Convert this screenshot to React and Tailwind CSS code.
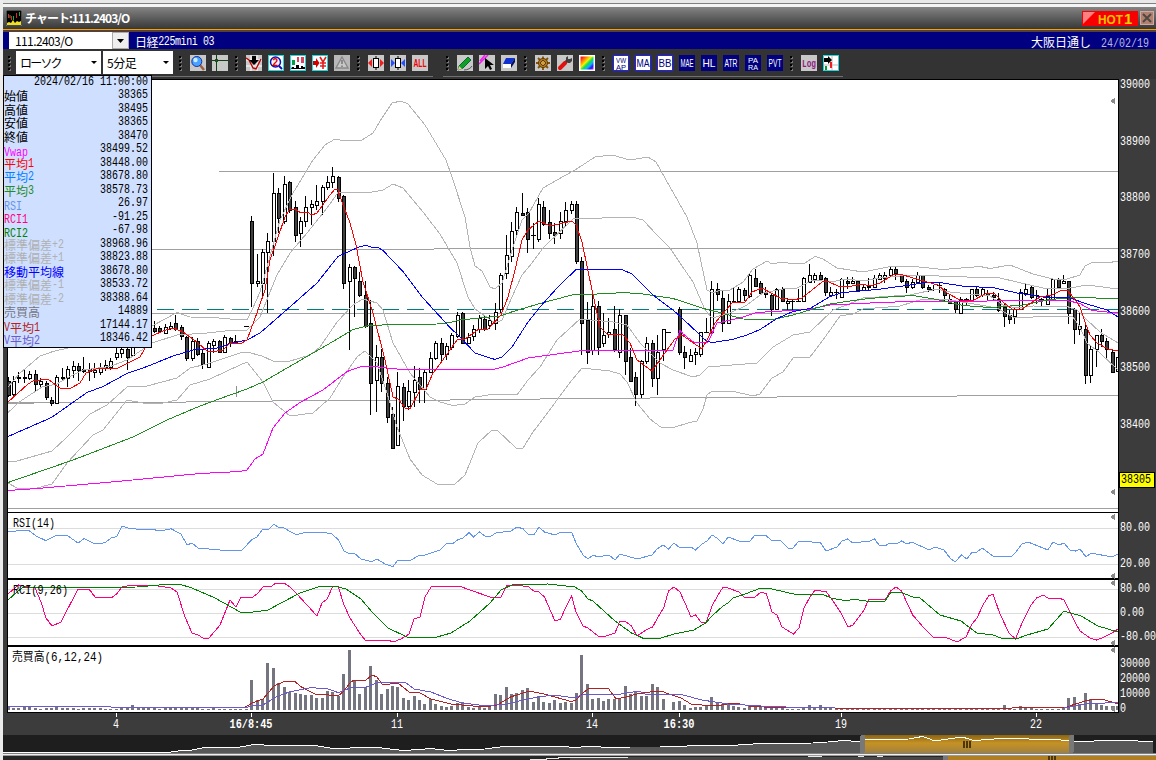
import React from "react";

// index, high, body top, body bottom, low, kind (1 = falling, 0 = rising)
const CANDLES = [
  [-45, 377, 381, 395, 397, 1], [-44, 376, 381, 394, 396, 0], [-43, 372, 377, 378, 383, 1], [-42, 370, 377, 378, 383, 1],
  [-41, 371, 374, 378, 380, 0], [-40, 370, 374, 384, 391, 1], [-39, 378, 381, 384, 387, 0], [-38, 381, 383, 397, 400, 1],
  [-37, 397, 400, 403, 406, 1], [-36, 375, 377, 403, 403, 0], [-35, 368, 377, 378, 380, 1], [-34, 366, 369, 378, 387, 0],
  [-33, 361, 366, 370, 378, 0], [-32, 363, 366, 370, 381, 1], [-31, 357, 369, 371, 373, 1], [-30, 363, 369, 371, 381, 1],
  [-29, 363, 370, 372, 378, 0], [-28, 363, 367, 372, 375, 0], [-27, 360, 365, 367, 371, 0], [-26, 358, 361, 367, 370, 0],
  [-25, 348, 353, 357, 360, 0], [-24, 343, 349, 353, 358, 0], [-23, 345, 349, 357, 370, 1], [-22, 343, 345, 355, 357, 0],
  [-18, 321, 328, 331, 333, 1], [-17, 326, 328, 331, 333, 1], [-16, 324, 327, 333, 334, 0], [-15, 322, 326, 328, 330, 0],
  [-14, 315, 323, 329, 331, 1], [-13, 325, 327, 336, 340, 1], [-12, 336, 337, 358, 361, 1], [-11, 337, 341, 358, 361, 0],
  [-10, 338, 341, 354, 356, 1], [-9, 350, 353, 364, 369, 1], [-8, 341, 343, 367, 367, 0], [-7, 339, 341, 345, 353, 0],
  [-6, 340, 341, 352, 353, 1], [-5, 335, 337, 352, 353, 0], [-4, 337, 338, 343, 347, 1], [-3, 335, 341, 343, 344, 1],
  [-1, 326, 326, 326, 327, 1], [0, 216, 221, 283, 307, 1], [1, 254, 281, 283, 287, 0], [2, 249, 252, 283, 297, 0],
  [3, 233, 241, 252, 313, 0], [4, 173, 193, 241, 256, 0], [5, 188, 193, 218, 233, 1], [6, 176, 184, 221, 224, 0],
  [7, 181, 182, 210, 213, 1], [8, 201, 207, 235, 242, 1], [9, 217, 221, 233, 247, 0], [10, 196, 207, 221, 227, 0],
  [11, 200, 204, 207, 225, 0], [12, 185, 201, 205, 210, 0], [13, 185, 187, 201, 215, 0], [14, 176, 182, 187, 190, 0],
  [15, 167, 176, 182, 188, 0], [16, 176, 177, 198, 202, 1], [17, 195, 196, 283, 289, 1], [18, 264, 267, 281, 350, 0],
  [19, 266, 267, 278, 317, 1], [20, 272, 281, 295, 297, 1], [21, 281, 295, 326, 328, 1], [22, 300, 323, 383, 415, 1],
  [23, 345, 357, 380, 412, 0], [24, 349, 357, 383, 392, 1], [25, 377, 383, 417, 423, 1], [26, 407, 414, 448, 448, 1],
  [27, 372, 386, 445, 446, 0], [28, 383, 387, 406, 421, 1], [29, 380, 391, 406, 410, 0], [30, 366, 380, 392, 407, 0],
  [31, 368, 377, 389, 403, 1], [32, 370, 372, 389, 403, 0], [33, 352, 358, 372, 373, 0], [34, 341, 343, 358, 360, 0],
  [35, 338, 343, 354, 361, 1], [36, 343, 346, 354, 360, 0], [37, 333, 335, 347, 350, 0], [38, 312, 315, 336, 338, 0],
  [39, 312, 313, 343, 343, 1], [40, 333, 337, 343, 343, 0], [41, 325, 329, 336, 341, 0], [42, 315, 318, 329, 333, 0],
  [43, 315, 319, 329, 331, 1], [44, 315, 320, 325, 329, 0], [45, 303, 312, 323, 330, 0], [46, 273, 275, 309, 313, 0],
  [47, 235, 255, 273, 279, 0], [48, 222, 231, 256, 262, 0], [49, 207, 212, 230, 238, 0], [50, 193, 213, 215, 216, 1],
  [51, 208, 212, 239, 253, 1], [52, 223, 235, 235, 249, 1], [53, 198, 204, 239, 242, 0], [54, 201, 207, 224, 226, 1],
  [55, 210, 222, 233, 239, 1], [56, 223, 232, 235, 244, 1], [57, 212, 221, 233, 239, 0], [58, 202, 210, 221, 227, 0],
  [59, 201, 204, 210, 214, 0], [60, 201, 204, 261, 264, 1], [61, 257, 261, 323, 355, 1], [62, 302, 320, 352, 364, 1],
  [63, 295, 306, 350, 355, 0], [64, 301, 306, 347, 355, 1], [65, 313, 335, 343, 347, 0], [66, 318, 332, 334, 338, 0],
  [67, 306, 329, 349, 352, 1], [68, 309, 315, 352, 358, 0], [69, 315, 315, 361, 375, 1], [70, 348, 357, 381, 381, 1],
  [71, 372, 377, 394, 406, 1], [72, 360, 361, 394, 398, 0], [73, 337, 343, 361, 364, 0], [74, 340, 343, 378, 387, 1],
  [75, 335, 352, 378, 395, 0], [76, 329, 329, 349, 361, 0], [77, 332, 332, 332, 333, 1], [79, 307, 309, 352, 355, 1],
  [80, 346, 352, 357, 369, 1], [81, 349, 355, 361, 361, 0], [82, 348, 352, 354, 365, 0], [83, 332, 332, 354, 357, 0],
  [84, 318, 332, 332, 333, 1], [85, 281, 289, 332, 332, 0], [86, 283, 289, 294, 301, 1], [87, 291, 298, 323, 332, 1],
  [88, 294, 301, 323, 324, 0], [89, 287, 301, 302, 303, 1], [90, 287, 289, 301, 303, 0], [91, 288, 290, 295, 301, 1],
  [92, 273, 275, 296, 298, 0], [93, 269, 278, 286, 287, 1], [94, 281, 283, 293, 295, 1], [95, 287, 292, 294, 298, 1],
  [96, 294, 295, 309, 316, 1], [97, 288, 289, 309, 309, 0], [98, 287, 289, 301, 302, 1], [99, 298, 301, 303, 311, 0],
  [100, 300, 301, 301, 312, 1], [101, 289, 301, 301, 302, 1], [102, 277, 278, 301, 302, 0], [103, 264, 275, 282, 283, 0],
  [104, 273, 275, 279, 283, 0], [105, 272, 275, 279, 281, 1], [106, 277, 278, 292, 296, 1], [107, 287, 292, 295, 297, 0],
  [108, 289, 292, 292, 299, 1], [109, 278, 279, 297, 298, 0], [110, 277, 281, 283, 289, 1], [111, 277, 281, 283, 284, 0],
  [112, 280, 281, 290, 291, 1], [113, 285, 287, 290, 291, 0], [114, 278, 286, 287, 290, 1], [115, 275, 278, 287, 288, 0],
  [116, 273, 275, 279, 280, 0], [117, 272, 275, 278, 283, 0], [118, 267, 269, 275, 277, 0], [119, 267, 269, 273, 280, 1],
  [120, 274, 275, 281, 283, 1], [121, 279, 281, 287, 293, 1], [122, 279, 282, 287, 289, 0], [123, 272, 275, 282, 283, 0],
  [124, 275, 275, 287, 289, 1], [125, 285, 287, 289, 292, 1], [126, 285, 289, 289, 291, 1], [127, 283, 285, 285, 293, 1],
  [128, 288, 289, 295, 301, 1], [129, 295, 299, 303, 304, 0], [130, 300, 301, 309, 313, 1], [131, 297, 299, 313, 313, 0],
  [132, 298, 299, 299, 305, 1], [133, 289, 289, 301, 301, 0], [134, 287, 289, 295, 297, 1], [135, 288, 289, 295, 297, 0],
  [136, 290, 293, 295, 301, 1], [137, 292, 295, 297, 300, 1], [138, 293, 299, 310, 312, 1], [139, 304, 307, 316, 327, 1],
  [140, 310, 315, 319, 324, 1], [141, 308, 309, 316, 324, 0], [142, 289, 292, 309, 310, 0], [143, 283, 289, 293, 296, 0],
  [144, 286, 287, 297, 299, 1], [145, 290, 295, 295, 304, 1], [146, 298, 299, 299, 306, 1], [147, 289, 296, 304, 305, 0],
  [148, 278, 279, 299, 299, 0], [149, 278, 279, 287, 287, 1], [150, 275, 281, 283, 284, 0], [151, 281, 281, 313, 324, 1],
  [152, 308, 309, 329, 344, 1], [153, 313, 326, 329, 335, 0], [154, 325, 329, 375, 384, 1], [155, 345, 349, 375, 383, 0],
  [156, 335, 335, 349, 367, 0], [157, 329, 335, 341, 347, 1], [158, 338, 341, 349, 358, 1], [159, 350, 352, 372, 372, 1],
  [160, 357, 357, 371, 371, 0],
];

const LINES = {
  red: "8,402 28,384 33,381 48,379 60,388 71,388 80,383 86,373 96,369 118,368 140,357 152,336 163,331 173,328 183,332 197,342 208,352 217,351 223,350 230,343 240,344 247,340 258,310 265,290 270,260 277,240 285,217 289,210 295,209 301,213 307,212 312,215 317,213 330,195 335,189 338,190 342,202 350,223 356,245 363,282 373,313 385,360 393,397 398,399 405,408 410,409 420,390 426,389 433,373 440,364 457,340 465,339 479,329 488,329 501,315 508,297 515,270 522,240 528,230 539,221 550,226 572,221 576,225 582,242 592,290 600,327 607,334 623,335 630,343 637,360 652,371 662,357 675,339 682,335 702,349 707,340 715,323 733,302 745,302 752,292 762,288 780,298 793,300 802,298 822,282 827,281 840,287 852,286 862,284 870,286 880,283 893,275 900,274 913,278 938,285 947,293 960,300 972,301 987,293 995,294 1003,302 1012,309 1022,309 1040,297 1052,295 1060,291 1067,290 1073,297 1080,307 1085,322 1090,335 1097,343 1108,349 1118,351",
  blue: "8,436.5 51.5,417.5 60,411.5 87,392.5 103,386.5 127,373.5 147,366.5 173,356 193,350 217,348 230,343.5 247,340 260,333 287,309.5 300,298 317,283 338,256.5 360,246.5 366,245.5 371,247 377,247 383,250.5 403,271.5 423,298 450,327.5 460,337 475,353 495,359.5 502,357 512,347 528,322 540,307 557,288 576,269.5 613,269.5 623,270 632,274 653,295 673,310 682,318 700,335 707,341.5 713,342.5 732,339.5 747,335 760,329.5 777,318.5 793,311.5 810,308.5 830,296.5 843,292.5 877,289.5 910,285 925,282.5 940,282.5 962,286 995,288 1017,293 1043,297 1070,298 1087,304 1107,310 1118,317",
  green: "8,482.5 73,460 133,437 167,420 200,406 230,395 247,389 263,382 287,368 313,353 333,341.5 353,329.5 367,326 390,324.5 437,324 450,322.5 460,320 500,316 513,311.5 540,303.5 572,295 610,293.5 623,292.5 643,294 673,298.5 690,304 707,309.5 720,312.5 743,319 773,319.5 793,315 813,309 830,304 860,299.5 880,297.5 913,295.5 937,299.5 963,305.5 990,307.5 1023,305 1050,299.5 1073,297.5 1118,298.5",
  vwap: "8,490.5 37,488.5 117,481.5 200,473.5 240,471.5 247,470 255,459 263,454 273,428 285,413 300,402.5 323,390 347,371.5 360,367 370,366 390,368.5 410,370 493,369.5 503,367 528,358 557,354 587,350 673,350 680,330 683,334 695,343 708,342 717,323 740,318 757,312.5 807,309.5 830,305 880,302.5 910,301.5 1067,300.5 1080,303.5 1092,310.5 1107,312 1118,313",
};

const BANDS = [
  "8,387 20,373 40,356 53,351.5 68,348 110,340 152,326 177,312.5 190,317 213,317.5 230,319 247,320 252,310 260,292 280,220 293,193 313,160 325,145 335,139 345,141 362,140 373,133 382,118 392,103 401,101 408,104 425,125 446,160 453,180 465,217 470,247 475,266 482,271 490,287 495,289 502,283 513,247 522,220 529,213 543,188 557,180 575,170 595,157 612,155 630,160 648,157 656,162 670,187 687,217 697,243 707,290 713,293 718,291 730,290 743,282 753,269 767,261 772,264 783,262 793,264 805,263 815,256.5 823,259 837,268 863,272 893,266 910,266 943,269.5 980,266.5 990,268.5 1010,265 1033,274 1053,279 1067,279 1080,275 1085,266 1093,262 1107,263 1118,261",
  "8,412.5 20,401.5 42,387 57,384 67,378 83,370 110,366.5 127,360 152,343 177,335 207,333 230,330.5 247,330 260,317 270,292 277,275 290,253 307,233 327,208 338,192.5 367,193 383,190 393,184 403,188 423,212 440,234 457,263 468,297 475,309 495,323 502,320 512,297 522,275 532,263 543,248 573,219 632,217 643,220 657,235 670,248 680,263 693,282 705,310 712,318 730,313 747,305 763,293 783,289 797,288 813,280 830,282 847,279 863,281 880,278 910,275 967,277 1000,278 1017,282 1043,288 1070,288 1087,285 1118,289",
  "8,461 17,461 52,451 67,437 90,414 107,405 127,387 147,386 177,378 190,368 207,364 240,353 247,352 262,356 273,361 287,362 310,355 320,347 337,322 353,305 363,299 377,303 383,310 393,343 410,373 430,397 440,402 453,405.5 465,404 475,397 495,394 517,395 528,380 540,367 557,340 580,319 613,322 627,325 640,343 660,363 673,370 693,377 700,375 708,367 757,363 773,347 793,335 810,332 833,310 847,305 863,298 910,295 937,289 950,292 990,296 1003,305 1017,308 1033,306 1067,306.5 1077,310 1087,320 1100,332 1118,343",
  "8,483 17,488 33,489 52,484 67,463 93,435 103,430 127,400 143,403 163,403 177,400 190,385 210,379 240,365 247,362 263,382 273,402 290,416 313,413 330,398 343,377 357,357 365,351 377,363 387,393 397,427 410,459 422,475 437,484 455,484 465,475 478,443 492,430 497,430 516,448 523,448 533,432 543,419 557,400 572,380 582,368 610,371 620,374 627,382 637,403 650,419 662,428 675,427 688,423 697,421 703,409 707,395 712,391 732,391 753,396 760,394 772,378 783,372 793,358 810,357 823,340 840,316 853,314 863,309 900,306 923,299 950,300 980,305 997,308 1013,317 1033,317 1057,316 1073,317 1080,327 1087,343 1100,353 1118,370",
];

const RSI =
  "8,532 18.5,530.7 29.6,531 36,536 46,540.7 57,535 68,536 78,543 84,538.7 95,544 105,542.7 111,538 116.5,536.7 122,526 128,528 144,530 150,529 161,531 171,528.7 181,534 187,545 192,543 198,548 220,550 242,550 251.5,540 257,537 263,529 268,530 274,524 278,527 284,528 296,534.7 307,532 322,532 332,534 338.5,540 344,551 350,554 354,553 361,559 372,561.7 377,559 385,564 393,566.7 398,560 409,561 420,555 425,555 440,550 447,543 452,544 458,539.7 463,538 469,532.7 473.5,537 479.5,532 485,536 491,536 496,533 511,531 517,527 523,528.7 528,534 534,535 539,527 544.5,532 555,535 560.5,532 571.6,532 576,543 583,555 588,559 593,555 598,557 609,555 615,560 620,554 637,559 652,555 657,549 663,545 668.5,549 674,543 680,548 691,547 695.5,550 702,544 707,541 712,535 717,538 723,544 728,537 739,541 750,541 755,535 766.5,536 771,540 781,541 788,548 793,548 799,541 809,541 815,543 820,542 826,551 837,547 842,541 847.5,539 853,543 870,541 874.5,539 879,545 885,546 890,543 896,544 901.6,541 907,544 912,542 929,550 935,547 944,550 950,558 955,562 961.5,555 967,559 972,552 977,552 982,548 993,556 1011,557 1016,552 1022,544 1028,542 1048,550 1053,542 1059,545 1064,543 1070,550 1075.5,551 1080,549 1086,557 1091,553 1112,557 1118,554";

const RCI_SHORT =
  "8,594 18.5,585 35,588 41,602 46,618 52,626 61,622 78,589 89,589 95,597 111,598 116.5,594 122,587 133,585 152,585 171,588 177,592 185,617 192,633 198,635 203,638 209,638 220,625 230,600 236,607 241,597 253,597 258,593 263,587 272,586 274.5,584 285,583.7 290,587 296,593 307,605 317,616 322,603 327,599 333,586 338,586 344,605 350,618 361,635 366,641 388,640 393,642 401,639 409,634 414,619 420,617 425,597 431,587 447,586 459,586 470,590 490,597 501,597 507,585 523,586 529,587 533.5,591 539,592 544.5,597 555,621 560.5,619 566,607 571.6,596 576,612 583,626 588,628 598,636 606,636 615,633 620,621 626,622 631.5,626 637,636 646,630 652.6,627 657,619 664,607 668.5,591 674,587 680,592 685,603 691,617 695.5,615 701,622 706,623 712,606 717,597 723,587 728,588 739,592 744,597 755,597 761,592 766.5,594 772,612 777,615 782,627 793.5,634 799,628 804,608 810,597 815,590 826.5,592 831,598 841.6,614 848,627 853,625 864,610 869,599 885,600 890.5,591 896,587 901.6,591 907,603 912.7,615 924,628 933,637 945,637 957,642 966,637 972,624 977,618 983,605 988.5,596 993,594 999.6,613 1009,633 1015.5,639 1022,623 1031,605 1036.6,598 1043,595 1048,598 1059,598 1064,600 1070,612 1075.5,623 1080,631 1090,638 1096.5,640 1102,638 1112,633 1118,629";

const RCI_LONG =
  "8,600 17,592 22,588 137,587 159,585 179,584 192,588 215,598 240,612 246,613 268,610 281,603 300,593 318,587 335,586 346,589 361,599 372,612 388,628 407,637 420,638 437,637 451,633 470,621 490,603 501,590 512,585 547.5,584 575,587 581.5,591 588,599 593,601 604,611 615,621 631.5,633 642.6,638 661,638 674,634 694,630 705.5,623 713,615 723,606 728,603 733,598 742.5,595 761,588 772,589 798,595 822,594 831,598 847,601 853,599 872,602 885,601 890.5,593 900,592 913,597 920,598 940,615 961,621 977,633 993,635 1001,638 1016,639 1027,635 1048,629 1064,611 1081,616 1098,626 1118,632";

const VOL_MA1 =
  "8,706.7 111,707 244,708 252,703 263,699 274,686 283,682 295,681.7 301.5,687 314.5,694 338.5,695.7 344,690.7 350,683 354,680 366,680 372,675 377,677 383,685 398,683 409,692 420,693 431,699 451,704 481,706.7 496,705.7 510.5,697 529,691 544,694 555,697 571.6,701.7 576,700 583,693 588,689 608.6,688.7 616,699 626,697 637,694 650,692 662,691 668.5,694 681,698 691,704 702,705 717,706 728,703.7 739,703.7 752,706.7 783,707.5 835,708 1012,708 1035,707 1064,708 1075.5,704 1086,700.7 1096,699 1105,700 1118,704";

const VOL_MA2 =
  "8,706.7 111,707 244,708 253,705.7 263,705 276,697 290,691.7 311,687.7 327,688.7 338.5,692.7 350,688 366,687 377,683 388,682 405,682 414,689 431,692 446,698 462,703 485,705.7 507,704 523,700 538,697 555,695 574,698 583,694.5 598,695 617,694.7 639,691 646,694.7 661,694.7 683,695 702,700 728,704 761,706 798,707.5 835,708 1064,708 1086,704 1105,703 1118,702";

// bar heights in px, first one at index -45
const VOLUME = [
  3, 2, 2, 3, 3, 2, 1, 2, 2, 3, 2, 2, 2, 1, 2, 2, 2, 2, 1, 1, 1, 2, 3, 5, 3, 2, 2, 2, 1, 2, 2, 2, 2, 2, 2, 2, 1, 1, 2, 1, 1, 1, 1, 1, 1,
  30, 10, 11, 47, 42, 27, 23, 18, 17, 16, 15, 15, 12, 12, 19, 18, 14, 36, 60, 29, 16, 23, 44, 30, 16, 21, 24, 23, 12, 10, 14, 10, 6, 11, 6, 4, 3, 4, 7, 8, 3, 2, 3, 2, 3,
  16, 15, 23, 16, 17, 20, 22, 8, 14, 8, 7, 10, 7, 8, 7, 17, 55, 26, 11, 12, 9, 11, 11, 11, 24, 16, 19, 14, 14, 26, 23, 11, 0, 8, 9, 5, 2, 3, 3, 4, 13, 7, 6, 6, 4, 3, 2, 5, 4, 3, 3, 2, 3, 3, 1, 1, 1, 2,
  5, 2, 5, 2, 3, 2, 2, 1, 1, 2, 2, 1, 1, 1, 1, 1, 1, 1, 2, 1, 1, 1, 1, 1, 1, 1, 1, 2, 1, 1, 1, 1, 1, 1, 1, 1, 5, 2, 1, 4, 2, 2, 1, 1, 1, 1, 1, 2,
  12, 13, 6, 17, 11, 6, 5, 4, 4, 4,
];

const READOUT = [
  ["始値", "38365", "text-black"],
  ["高値", "38495", "text-black"],
  ["安値", "38365", "text-black"],
  ["終値", "38470", "text-black"],
  ["Vwap", "38499.52", "text-[#ff00ff]"],
  ["平均1", "38448.00", "text-[#ff0000]"],
  ["平均2", "38678.80", "text-[#0080ff]"],
  ["平均3", "38578.73", "text-[#228b22]"],
  ["RSI", "26.97", "text-[#6495ed]"],
  ["RCI1", "-91.25", "text-[#ff0080]"],
  ["RCI2", "-67.98", "text-[#008000]"],
  ["標準偏差+2", "38968.96", "text-[#b0b0b0]"],
  ["標準偏差+1", "38823.88", "text-[#b0b0b0]"],
  ["移動平均線", "38678.80", "text-[#0000ff]"],
  ["標準偏差-1", "38533.72", "text-[#b0b0b0]"],
  ["標準偏差-2", "38388.64", "text-[#b0b0b0]"],
  ["売買高", "14889", "text-[#75757f]"],
  ["V平均1", "17144.17", "text-[#b22222]"],
  ["V平均2", "18346.42", "text-[#6a5acd]"],
];

// label, x of the tick, label width, bold
const TIMES = [
  ["4", 116, 6, false],
  ["16/8:45", 251, 43, true],
  ["11", 397, 12, false],
  ["14", 592, 12, false],
  ["16:30", 679, 31, true],
  ["19", 841, 12, false],
  ["22", 1036, 12, false],
];

const barX = (i) => Math.round(251.2 + i * 5.4125);

// tall, narrow half-width characters, 6px each
const Mono = ({ children }) => (
  <span className="inline-block scale-y-130 whitespace-pre font-['Liberation_Mono',monospace] text-[10px] leading-none">{children}</span>
);

const Mixed = ({ text }) => (
  <span className="inline-flex items-center whitespace-pre font-['Noto_Sans_CJK_JP',sans-serif] text-[12px] leading-none">
    {text.split(/([\x20-\x7e]+)/).map((part, i) => (i % 2 ? <Mono key={i}>{part}</Mono> : part ? <span key={i}>{part}</span> : null))}
  </span>
);

const Line = ({ points, color }) => <polyline points={points} fill="none" stroke={color} strokeWidth="1" />;

const Arrow = ({ y }) => <path d={`M1110 ${y}l5 -3v6z`} fill="#8a8a8a" />;

const Panel = ({ top, height, children }) => (
  <svg width="1110" height={height} viewBox={`8 ${top} 1110 ${height}`} shapeRendering="crispEdges" className="block bg-white">
    {children}
  </svg>
);

const PanelTitle = ({ x, y, width, children }) => (
  <text x={x} y={y} textLength={width} lengthAdjust="spacingAndGlyphs" fontSize="12" fill="#000" fontFamily="'Liberation Mono','Noto Sans CJK JP',monospace">
    {children}
  </text>
);

const PriceChart = () => (
  <Panel top={79} height={433}>
    <path d="M219 171.5H1118M8 249.5H434M434 248.5H1118M8 313.5H1118M8 402.5H70M8 403.5H34M70 402.5H186M186 401.5H272M272 400.5H450M450 399.5H540M540 398.5H650M650 397.5H777M777 396.5H957M957 395.5H1118M8 508.5H1118" stroke="#a0a0a0" fill="none" />
    <path d="M157.3 309.5H1118" stroke="#007c7c" strokeDasharray="17 8" fill="none" />
    <path d="M236.5 386V397" stroke="#909090" />
    {CANDLES.map(([i, high, top, bottom, low, falling]) => {
      const x = barX(i);
      return (
        <g key={i}>
          <rect x={x} y={high} width="1" height={low - high} fill="#000" />
          {bottom === top ? (
            <rect x={x - 2} y={top} width="5" height="1" fill="#000" />
          ) : (
            <rect x={x - 0.5} y={top + 0.5} width="3" height={bottom - top} fill={falling ? "#404040" : "#fff"} stroke="#000" />
          )}
        </g>
      );
    })}
    {BANDS.map((points) => (
      <Line key={points} points={points} color="#b4b4b4" />
    ))}
    <Line points={LINES.vwap} color="#ff00ff" />
    <Line points={LINES.green} color="#228b22" />
    <Line points={LINES.blue} color="#0000ff" />
    <Line points={LINES.red} color="#ff0000" />
    <path d="M8 79.5H1118" stroke="#000" />
    <Arrow y={101} />
    <Arrow y={492} />
  </Panel>
);

const RsiChart = () => (
  <Panel top={512} height={67}>
    <path d="M8 528.5H1118M8 564.5H1118" stroke="#dcdcdc" />
    <Line points={RSI} color="#6495ed" />
    <path d="M8 512.5H1118M8 578.5H1118" stroke="#000" />
    <PanelTitle x={13} y={527} width={42}>RSI(14)</PanelTitle>
    <Arrow y={517} />
    <Arrow y={576} />
  </Panel>
);

const RciChart = () => (
  <Panel top={579} height={67}>
    <path d="M8 589.5H1118M8 613.5H1118M8 637.5H1118" stroke="#dcdcdc" />
    <Line points={RCI_SHORT} color="#ff0080" />
    <Line points={RCI_LONG} color="#008000" />
    <path d="M8 579.5H1118M8 645.5H1118" stroke="#000" />
    <PanelTitle x={13} y={594} width={55}>RCI(9,26)</PanelTitle>
    <Arrow y={583} />
    <Arrow y={643} />
  </Panel>
);

const VolumeChart = () => (
  <Panel top={646} height={67}>
    {VOLUME.map((h, n) => (
      <rect key={n} x={barX(n - 45) - 1} y={710 - h} width="3" height={h} fill="#75757f" />
    ))}
    <Line points={VOL_MA1} color="#b22222" />
    <Line points={VOL_MA2} color="#6a5acd" />
    <path d="M8 646.5H1118M8 712.5H1118" stroke="#000" />
    <PanelTitle x={12} y={661} width={91}>売買高(6,12,24)</PanelTitle>
    <Arrow y={650} />
    <Arrow y={709} />
  </Panel>
);

const Readout = () => (
  <div className="absolute left-[3px] top-[75px] h-[273px] w-[149px] border border-black bg-[#cfdfff] pr-[3px]">
    <div className="-mt-px flex h-[13.5px] items-center justify-end leading-none">
      <Mixed text="2024/02/16 11:00:00" />
    </div>
    {READOUT.map(([label, value, color]) => (
      <div key={label} className="flex h-[13.5px] items-center justify-between leading-none">
        <span className={color}>
          <Mixed text={label} />
        </span>
        <Mixed text={value} />
      </div>
    ))}
  </div>
);

const AxisLabel = ({ children }) => (
  <div className="flex h-3 items-center whitespace-nowrap pl-px leading-none">
    <Mono>{children}</Mono>
  </div>
);

const Grip = () => (
  <div className="flex w-1 flex-col gap-[2px]">
    {[0, 1, 2, 3].map((n) => (
      <div key={n} className="h-[2px] w-[2px] bg-black shadow-[1px_1px_0_#777]" />
    ))}
  </div>
);

const Icon = ({ bg = "#c8c8c8", frame, children }) => (
  <svg width="16" height="16" viewBox="0 0 16 16" className="block shrink-0">
    <rect width="16" height="16" fill={bg} />
    {children}
    {frame ? <rect x="0.5" y="0.5" width="15" height="15" fill="none" stroke={frame} /> : null}
  </svg>
);

const TextIcon = ({ text, light }) => (
  <Icon bg={light ? "#fff" : "#000080"} frame={light ? "#2020ff" : undefined}>
    {text.length > 3 ? (
      <g fill={light ? "#000080" : "#fff"} fontFamily="Liberation Sans" fontSize="8">
        <text x="3" y="7.5" textLength="10" lengthAdjust="spacingAndGlyphs">{text.slice(0, 2)}</text>
        <text x="3" y="14.5" textLength="10" lengthAdjust="spacingAndGlyphs">{text.slice(2)}</text>
      </g>
    ) : (
      <text x="1.5" y="12" textLength="13" lengthAdjust="spacingAndGlyphs" fill={light ? "#000080" : "#fff"} fontFamily="Liberation Sans" fontSize={text.length > 2 ? "10" : "11"}>
        {text}
      </text>
    )}
  </Icon>
);

const Group = ({ className, children }) => (
  <div className={`flex items-center gap-1.5 ${className}`}>
    <div className="w-[5px]">
      <Grip />
    </div>
    {children}
  </div>
);

const CYAN = "#20d8d8";

const Toolbar = () => (
  <div className="flex h-[27px] items-center bg-[#333] text-black">
    <div className="w-[7px] pl-[5px]">
      <Grip />
    </div>
    <div className="ml-[6px] flex h-[23px] w-[85px] items-center justify-between bg-white pl-1 pr-1">
      <span className="font-['Noto_Sans_CJK_JP',sans-serif] text-[12px] leading-none tracking-[-1.8px]">ローソク</span>
      <svg width="6" height="3"><path d="M0 0h6l-3 3z" /></svg>
    </div>
    <div className="ml-[2px] flex h-[23px] w-[70px] items-center justify-between bg-white pl-1 pr-1">
      <span className="font-['Noto_Sans_CJK_JP',sans-serif] text-[12px] leading-none tracking-[-0.5px]">5分足</span>
      <svg width="6" height="3"><path d="M0 0h6l-3 3z" /></svg>
    </div>
    <Group className="ml-[6px] w-[56px]">
      <Icon>
        <path d="M10 10l4 5" stroke="#a06040" strokeWidth="2.5" />
        <circle cx="6.8" cy="6.5" r="5" fill="#48a0ff" stroke="#1030a0" />
        <circle cx="5.5" cy="5" r="2.2" fill="#c8ecff" />
      </Icon>
      <Icon>
        <path d="M4.5 0v16M0 5.5h16" stroke="#124012" />
        <path d="M3 4l3 3M6 4l-3 3" stroke="#285c28" />
      </Icon>
    </Group>
    <Group className="w-[122px]">
      <Icon>
        <path d="M0 5h16M0 11h16M5 0v16M11 0v16" stroke="#fff" />
        <path d="M0 3l3 2 4 8 3 1 5-10" stroke="#c00000" fill="none" strokeWidth="1.4" />
        <path d="M6 1h4v4h3l-5 5-5-5h3z" />
      </Icon>
      <Icon bg="#fff" frame={CYAN}>
        <circle cx="7.5" cy="7" r="5" fill="#f4f4ff" stroke="#1010b0" strokeWidth="1.5" />
        <path d="M11 11l3 3" stroke="#1010b0" strokeWidth="2" />
        <text x="4.5" y="11" fontSize="10" fontWeight="bold" fill="#e00000" fontFamily="Liberation Sans">2</text>
      </Icon>
      <Icon bg="#fff" frame={CYAN}>
        <path d="M2 5h3v5H2z" fill="#00a040" />
        <path d="M7 2h2v5H7zM11 2h3v6h-3z" fill="#e04060" />
        <path d="M1 14h14v-2h-2v-1h-2v2H9v-3H6v3H4v-1H2z" />
      </Icon>
      <Icon bg="#fff" frame={CYAN}>
        <path d="M1 6h3V3l3.5 5L4 13v-3H1z" fill="#d00000" />
        <path d="M8 2l3 5 3-5M11 7v7M8 8h6M8 11h6" stroke="#e02020" strokeWidth="1.6" fill="none" />
      </Icon>
      <Icon bg="#b8b8b8">
        <path d="M8 2l6 11H2z" fill="#c8c8c8" stroke="#888" strokeWidth="1.4" />
        <path d="M8 5v4M8 10.5v1.5" stroke="#777" strokeWidth="1.5" />
      </Icon>
    </Group>
    <Group className="w-[89px]">
      <Icon>
        <path d="M0 8l4-4v8zM16 8l-4-4v8z" fill="#f02020" />
        <path d="M8 1v14" stroke="#000" />
        <rect x="5.5" y="3.5" width="5" height="9" fill="#fff" stroke="#000" />
      </Icon>
      <Icon>
        <path d="M5 8L1 4v8zM11 8l4-4v8z" fill="#2050ff" />
        <path d="M8 1v14" stroke="#000" />
        <rect x="5.5" y="3.5" width="5" height="9" fill="#fff" stroke="#000" />
      </Icon>
      <Icon>
        <text x="1.5" y="12" textLength="13" lengthAdjust="spacingAndGlyphs" fill="#f00000" fontSize="11" fontWeight="bold" fontFamily="Liberation Sans">ALL</text>
      </Icon>
    </Group>
    <Group className="w-[78px]">
      <Icon>
        <path d="M2 11l9-9 3 3-8 8-5 2z" fill="#10a020" stroke="#064" />
        <path d="M1 15l1-4 3 3z" fill="#f0d0a0" />
        <path d="M7 15c4 0 7-2 8-4" stroke="#505050" fill="none" />
      </Icon>
      <Icon>
        <path d="M0 9L9 0M1 6l5-6" stroke="#f020f0" strokeWidth="1.5" />
        <path d="M6 3v11l3-3 2 4 2-1-2-4h4z" />
      </Icon>
      <Icon>
        <path d="M5 3h9l-4 6H2z" fill="#1030d0" />
        <path d="M2 9h8v4H2z" fill="#fff" />
        <path d="M10 9l4-6v4l-4 6z" fill="#001060" />
      </Icon>
    </Group>
    <Group className="w-[78px]">
      <Icon>
        <path d="M8 1.5V15M1 8h14M3 3l10 10M13 3L3 13" stroke="#80500c" strokeWidth="1.8" />
        <circle cx="8" cy="8" r="4.6" fill="#b07818" stroke="#604008" />
        <path d="M8 5L11 8 8 11 5 8z" fill="#d0a040" stroke="#604008" />
      </Icon>
      <Icon>
        <path d="M8 8l3-3" stroke="#303030" strokeWidth="3" />
        <path d="M9 5V2.5L11 1v3h2l2-1v3l-2 2h-2z" fill="#404040" />
        <path d="M3 13l5-5" stroke="#e01010" strokeWidth="4" strokeLinecap="round" />
      </Icon>
      <Icon bg="#fff">
        <defs>
          <linearGradient id="rainbow" x1="0" y1="0" x2="1" y2="1">
            <stop offset="0.1" stopColor="#ff2020" />
            <stop offset="0.3" stopColor="#ffa000" />
            <stop offset="0.42" stopColor="#f8f000" />
            <stop offset="0.56" stopColor="#10e050" />
            <stop offset="0.7" stopColor="#10b0ff" />
            <stop offset="0.84" stopColor="#2020f0" />
            <stop offset="1" stopColor="#c020f0" />
          </linearGradient>
        </defs>
        <rect x="1.5" y="1.5" width="13" height="13" fill="url(#rainbow)" />
      </Icon>
    </Group>
    <Group className="w-[188px]">
      <TextIcon text="VWAP" light />
      <TextIcon text="MA" light />
      <TextIcon text="BB" light />
      <TextIcon text="MAE" />
      <TextIcon text="HL" />
      <TextIcon text="ATR" />
      <TextIcon text="PARA" />
      <TextIcon text="PVT" />
    </Group>
    <Group className="w-[60px]">
      <Icon>
        <text x="1" y="11.5" textLength="14" lengthAdjust="spacingAndGlyphs" fill="#902080" fontSize="10" fontWeight="bold" fontFamily="Liberation Mono">Log</text>
      </Icon>
      <Icon bg="#fff" frame={CYAN}>
        <path d="M9 1v14M1 10h14" stroke="#bbb" />
        <path d="M1 3h4V1l4 4-4 4V7H1z" />
        <path d="M7 7h2v6H7z" fill="#f02020" />
        <path d="M2 11h2v4H2z" fill="#00a030" />
      </Icon>
    </Group>
  </div>
);

const OVERVIEW =
  "171,751.5 192,750 202,748 215,747 240,747 246,746 253,744.5 274,745.5 318,746 330,748 340,749 350,748 362,747 382,748 403,750.5 420,749.5 431,748.5 448,750.5 466,749.5 485,749 500,747 518,746.5 540,747 555,746 576,747.5 592,746 606,747.5 631,747 660,747 687,746 731,745.5 761,743.5 813,743 835,741.5 842,740.5 859,741.5 865,740 887,739.5 909,739 917,737.5 922,736.5 927,738 935,741 948,739 962,737 974,740.5 1001,738.5 1057,739.5 1079,742 1101,740.5 1130,740.5 1153,742";

const Overview = () => (
  <svg width="1153" height="25" viewBox="3 735 1153 25" shapeRendering="crispEdges" className="block">
    <defs>
      <linearGradient id="gold" x1="0" y1="0" x2="0" y2="1">
        <stop offset="0" stopColor="#8a6414" />
        <stop offset="0.45" stopColor="#c69224" />
        <stop offset="1" stopColor="#a08040" />
      </linearGradient>
    </defs>
    <rect x="3" y="735" width="1153" height="18" fill="#1e1e1e" />
    <polygon points={`171,753 ${OVERVIEW} 1153,753`} fill="#585858" />
    <rect x="863" y="735" width="208" height="18" fill="url(#gold)" />
    <path d="M3 752.5H171" stroke="#fff" />
    <polyline points={OVERVIEW} fill="none" stroke="#fff" />
    <rect x="860" y="735" width="5" height="18" rx="2" fill="#787878" />
    <rect x="1069" y="735" width="5" height="18" rx="2" fill="#787878" />
    <path d="M964 741v7M967 741v7M970 741v7" stroke="#4c3606" strokeWidth="2" />
    <rect x="0" y="753" width="1156" height="1" fill="#808080" />
    <rect x="0" y="754" width="1156" height="1" fill="#f0f0f0" />
    <rect x="0" y="755" width="1156" height="1" fill="#9a9a9a" />
    <rect x="3" y="756" width="1153" height="4" fill="#262626" />
    <rect x="570" y="757" width="374" height="3" fill="#484848" />
    <path d="M530 759.5h16v-1h12v-1h70M808 756.5h14M858 756.5h6M877 756.5h6" stroke="#e8e8e8" fill="none" />
    <rect x="943" y="756" width="5" height="4" fill="#787878" />
    <rect x="948" y="756" width="208" height="4" fill="#b08020" />
    <path d="M1049 756v4M1052 756v4M1055 756v4" stroke="#4c3606" strokeWidth="2" />
  </svg>
);

const TitleBar = () => (
  <div className="flex h-[22px] items-center bg-linear-to-b from-[#858585] to-[#383838] pl-[3px] pr-[2px]">
    <svg width="16" height="16" viewBox="0 0 16 16">
      <rect width="16" height="16" fill="#000" stroke="#999" />
      <path d="M2.5 4v4M5.5 6v4M10.5 3v5" stroke="#f02020" />
      <path d="M4 5v3M7.5 6v4M13.5 2v4" stroke="#20b040" />
      <path d="M1 15v-2l2-1 2 1 2-3 2 3 2-2 2 1 2-1v4z" fill="#f0e020" />
    </svg>
    <span className="ml-[3px] grow whitespace-nowrap font-['Noto_Sans_CJK_JP',sans-serif] text-[12px] font-bold leading-none tracking-[-1px] text-white">
      チャート:111.2403/O
    </span>
    <svg width="56" height="15" viewBox="0 0 56 15">
      <rect width="56" height="15" fill="#f80000" />
      <path d="M1 1h12L1 13z" fill="#ff8080" />
      <text x="16" y="12.5" textLength="25" lengthAdjust="spacingAndGlyphs" fontSize="12" fontWeight="bold" fill="#f0c000" fontFamily="Liberation Sans">HOT</text>
      <text x="42" y="13" fontSize="15" fontWeight="bold" fill="#e0d000" fontFamily="Liberation Sans">1</text>
    </svg>
    <svg width="14" height="14" viewBox="0 0 14 14" className="ml-[2px]">
      <rect x="0.5" y="0.5" width="13" height="13" fill="#b08070" stroke="#d0a8a0" />
      <path d="M3 3l8 8M11 3l-8 8" stroke="#504840" strokeWidth="2" />
    </svg>
  </div>
);

const App = () => {
  return (
    <div className="relative h-[760px] w-[1156px] overflow-hidden bg-[#ececec] pl-[3px]">
      <div className="h-[3px] bg-[#e8e8e8]" />
      <div className="h-px bg-[#808080]" />
      <div className="h-[3px] bg-[#f4f4f4]" />
      <TitleBar />
      <div className="h-px bg-[#f0a010]" />
      <div className="h-[2px] bg-[#5a4030]" />
      <div className="flex h-[17px] items-center bg-[#000080] text-white">
        <div className="ml-[6px] flex h-full w-[103px] items-center bg-white pl-[6px] font-['Noto_Sans_CJK_JP',sans-serif] text-[12px] leading-none tracking-[-0.6px] text-black">
          111.2403/O
        </div>
        <div className="flex h-full w-[17px] items-center justify-center border border-[#aaa] bg-[#eee]">
          <svg width="7" height="4"><path d="M0 0h7l-3.5 4z" /></svg>
        </div>
        <div className="ml-[6px] grow leading-none tracking-[-0.4px]">
          <Mixed text="日経225mini 03" />
        </div>
        <div className="leading-none">
          <Mixed text="大阪日通し" />
        </div>
        <div className="ml-[10px] mr-[7px] leading-none text-[#b8b8e0]">
          <Mixed text="24/02/19" />
        </div>
      </div>
      <Toolbar />
      <div className="flex h-[3px] bg-[#333]">
        <div className="ml-[5px] h-px w-[425px] bg-[#707070]" />
        <div className="ml-[10px] h-px w-[400px] bg-[#707070]" />
      </div>

      <div className="flex h-[634px] bg-[#3c3c3c]">
        <div className="w-[5px] border-r border-black" />
        <div className="w-[1110px]">
          <PriceChart />
          <RsiChart />
          <RciChart />
          <VolumeChart />
        </div>
        <div className="w-[38px] border-l border-black text-white">
          <div className="h-[433px]">
            <div className="flex h-[352px] flex-col justify-between">
              {["39000", "38900", "38800", "38700", "38600", "38500", "38400"].map((price) => (
                <AxisLabel key={price}>{price}</AxisLabel>
              ))}
            </div>
            <div className="mt-[41px] flex h-4 w-9 items-center border border-black bg-[#ffff00] text-black">
              <AxisLabel>38305</AxisLabel>
            </div>
          </div>
          <div className="flex h-[67px] flex-col justify-between pb-[9px] pt-[10px]">
            <AxisLabel>80.00</AxisLabel>
            <AxisLabel>20.00</AxisLabel>
          </div>
          <div className="flex h-[67px] flex-col justify-between pb-[3px] pt-[4px]">
            <AxisLabel>80.00</AxisLabel>
            <AxisLabel>0.00</AxisLabel>
            <AxisLabel>-80.00</AxisLabel>
          </div>
          <div className="flex h-[69px] flex-col justify-between pt-[12px]">
            <AxisLabel>30000</AxisLabel>
            <AxisLabel>20000</AxisLabel>
            <AxisLabel>10000</AxisLabel>
            <AxisLabel>0</AxisLabel>
          </div>
        </div>
      </div>

      <svg width="1153" height="22" viewBox="3 713 1153 22" className="block bg-[#3c3c3c]">
        {TIMES.map(([label, x, width, bold]) => (
          <g key={label} fill="#fff" fontFamily="'Liberation Mono',monospace" fontSize="13">
            <rect x={x} y="713" width="1" height="4" />
            <text x={x - width / 2} y="728" textLength={width} lengthAdjust="spacingAndGlyphs" fontWeight={bold ? "bold" : "normal"}>
              {label}
            </text>
          </g>
        ))}
      </svg>
      <Overview />
      <Readout />
    </div>
  );
};

export default App;
